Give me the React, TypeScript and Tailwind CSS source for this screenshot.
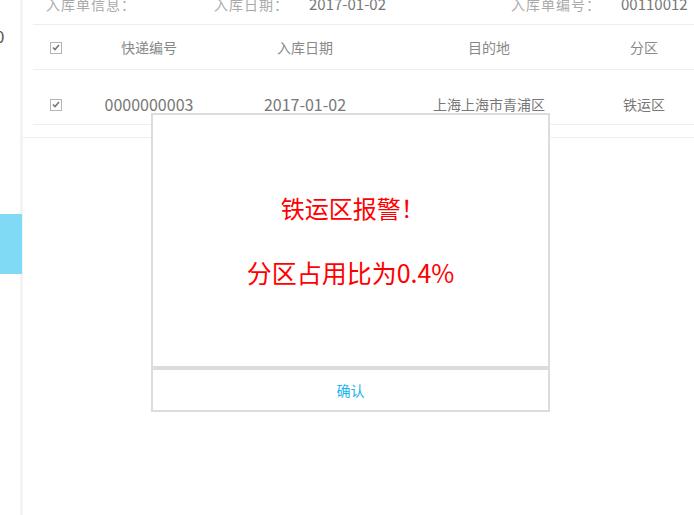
import React from "react";

const font = { fontFamily: '"Noto Sans CJK SC", "Noto Sans", sans-serif' };

function Check() {
  return (
    <span className="inline-flex h-[12px] w-[12px] items-center justify-center border border-[#b5b5b5] bg-white">
      <svg width="8" height="7" viewBox="0 0 8 7">
        <path d="M1 3.5 L3 5.5 L7 1" fill="none" stroke="#777" strokeWidth="1.6" />
      </svg>
    </span>
  );
}

const cols = "grid grid-cols-[46px_140px_172px_196px_114px] items-center";

export default function App() {
  return (
    <div
      className="relative flex h-[515px] w-[694px] overflow-hidden bg-white"
      style={font}
    >
      {/* side menu */}
      <div className="relative w-[20px] shrink-0">
        <div className="absolute left-[-5px] top-[25px] text-[17px] leading-[22px] text-[#555]">
          0
        </div>
        <div className="mt-[214px] h-[60px] w-[22px] bg-[#80daf5]" />
      </div>
      <div className="w-[3px] shrink-0 bg-[#f3f3f3]" />

      {/* main panel */}
      <div className="flex-1">
        <div className="border-b border-[#eeeeee] pb-[12px] pl-[10px]">
          <div className="flex h-[25px] items-start border-b border-[#eeeeee] pl-[13px] text-[14px] leading-[14px] text-[#aaaaaa]">
            <span className="-mt-[3px] w-[168px] tracking-[1px]">入库单信息：</span>
            <span className="-mt-[3px] w-[95px] tracking-[1px]">入库日期：</span>
            <span className="-mt-[3px] w-[202px] text-[15px] text-[#777]">2017-01-02</span>
            <span className="-mt-[3px] w-[110px] tracking-[1px]">入库单编号：</span>
            <span className="-mt-[3px] whitespace-nowrap text-[15px] text-[#777]">00110012</span>
          </div>
          <div className={`${cols} h-[45px] border-b border-[#eeeeee] text-center text-[14px] text-[#888]`}>
            <div className="flex justify-center pt-[1px]"><Check /></div>
            <div>快递编号</div>
            <div>入库日期</div>
            <div>目的地</div>
            <div>分区</div>
          </div>
          <div className={`${cols} h-[55px] border-b border-[#eeeeee] pt-[14px] text-center text-[14px] text-[#777]`}>
            <div className="flex justify-center pt-[1px]"><Check /></div>
            <div className="text-[16px]">0000000003</div>
            <div className="text-[16px]">2017-01-02</div>
            <div>上海上海市青浦区</div>
            <div>铁运区</div>
          </div>
        </div>
      </div>

      {/* alert dialog */}
      <div className="absolute left-[151px] top-[113px] flex h-[299px] w-[399px] flex-col border-2 border-[#dcdcdc] bg-white">
        <div className="flex flex-1 flex-col items-center pt-[76px] text-[24px] leading-[34px] text-[#ff0000]">
          <div className="pl-[10px]">铁运区报警！&nbsp;</div>
          <div className="mt-[30px] text-[25px]">分区占用比为0.4%</div>
        </div>
        <div className="h-[4px] bg-[#dcdcdc]" />
        <div className="flex h-[40px] items-center justify-center text-[14px] text-[#1ab3ea]">
          确认
        </div>
      </div>
    </div>
  );
}
